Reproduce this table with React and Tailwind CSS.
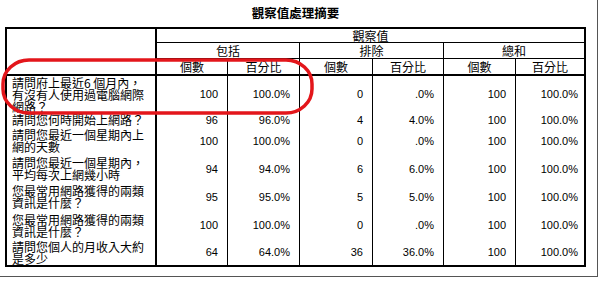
import React from 'react';

const rows = [
  { h: 'h-[37px]', label: ['請問府上最近6 個月內，', '有沒有人使用過電腦網際', '網路？'], v: ['100', '100.0%', '0', '.0%', '100', '100.0%'] },
  { h: 'h-[14px]', label: ['請問您何時開始上網路？'], v: ['96', '96.0%', '4', '4.0%', '100', '100.0%'] },
  { h: 'h-[28px]', label: ['請問您最近一個星期內上', '網的天數'], v: ['100', '100.0%', '0', '.0%', '100', '100.0%'] },
  { h: 'h-[28px]', label: ['請問您最近一個星期內，', '平均每次上網幾小時'], v: ['94', '94.0%', '6', '6.0%', '100', '100.0%'] },
  { h: 'h-[28px]', label: ['您最常用網路獲得的兩類', '資訊是什麼？'], v: ['95', '95.0%', '5', '5.0%', '100', '100.0%'] },
  { h: 'h-[29px]', label: ['您最常用網路獲得的兩類', '資訊是什麼？'], v: ['100', '100.0%', '0', '.0%', '100', '100.0%'] },
  { h: 'h-[25px]', label: ['請問您個人的月收入大約', '是多少'], v: ['64', '64.0%', '36', '36.0%', '100', '100.0%'] },
];

const cjk = "font-['Noto_Sans_CJK_TC',sans-serif]";

const HeadCell = ({ children, className = '' }) => (
  <div className={`flex items-center justify-center text-[12px] leading-none ${className}`}>
    {children}
  </div>
);

const App = () => {
  return (
    <div className={`relative w-[601px] h-[282px] bg-white text-black ${cjk}`}>
      <div className="w-[598px] h-[277px] border-r border-b border-[#555] pt-[6px]">
        <div className="w-[591px] h-[13px] text-center text-[12.5px] leading-[13px] font-bold">
          觀察值處理摘要
        </div>
        <div className="ml-[5px] mt-[8px] w-[581px] border-2 border-black">
          <div className="grid grid-cols-[150px_70px_72px_73px_71px_72px_69px]">
            <div className="row-span-3 border-r-2 border-b-2 border-black" />
            <HeadCell className="col-span-6 h-[14px] border-b border-black">觀察值</HeadCell>
            <HeadCell className="col-span-2 h-[16px] border-b border-black">包括</HeadCell>
            <HeadCell className="col-span-2 h-[16px] border-b border-l border-black">排除</HeadCell>
            <HeadCell className="col-span-2 h-[16px] border-b border-l border-black">總和</HeadCell>
            {['個數', '百分比', '個數', '百分比', '個數', '百分比'].map((t, i) => (
              <HeadCell
                key={i}
                className={`h-[17px] border-b-2 border-black ${i > 0 ? 'border-l' : ''}`}
              >
                {t}
              </HeadCell>
            ))}
            {rows.map((r, ri) => (
              <React.Fragment key={ri}>
                <div className={`${r.h} flex flex-col justify-center pl-[5px] border-r-2 border-black text-[12px] leading-[12px] whitespace-nowrap`}>
                  {r.label.map((l, li) => (
                    <span key={li}>{l}</span>
                  ))}
                </div>
                {r.v.map((v, vi) => (
                  <div
                    key={vi}
                    className={`${r.h} flex items-center justify-end font-['Liberation_Sans',sans-serif] text-[11px] leading-none border-black ${vi > 0 ? 'border-l' : ''} ${vi === 5 ? 'pr-[6px]' : 'pr-[9px]'}`}
                  >
                    {v}
                  </div>
                ))}
              </React.Fragment>
            ))}
          </div>
        </div>
      </div>
      <svg className="absolute left-0 top-0 pointer-events-none" width="601" height="282">
        <rect x="3" y="60" width="309" height="53" rx="26" ry="24" fill="none" stroke="#e3161b" strokeWidth="3.5" />
      </svg>
    </div>
  );
};

export default App;
